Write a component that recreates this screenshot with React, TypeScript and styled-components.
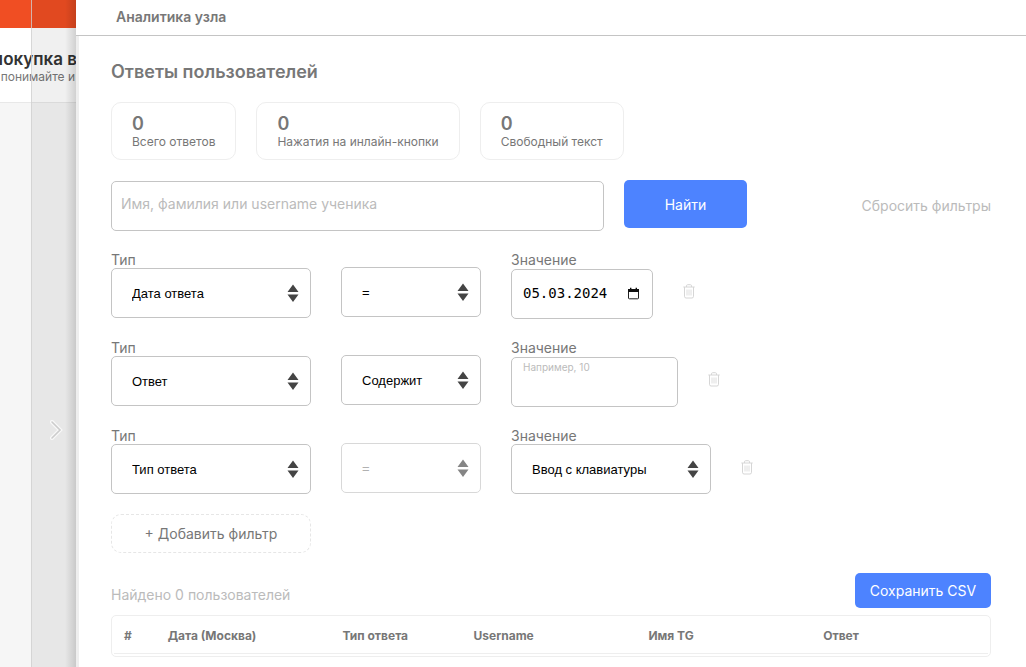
import React from "react";
import styled, { createGlobalStyle } from "styled-components";

const GlobalStyle = createGlobalStyle`
  *, *::before, *::after { box-sizing: border-box; }
  body {
    margin: 0;
    background: #f6f6f6;
    color: #777;
    font-family: Inter, Roboto, sans-serif;
    font-size: 14px;
    overflow: hidden;
  }
  button, input, select { font-family: inherit; margin: 0; }
`;

const Shell = styled.div`
  position: relative;
  min-height: 100vh;
  display: flex;
  overflow: hidden;
`;

const Underlay = styled.div`
  position: absolute;
  inset: 0;
`;

const BrandBar = styled.div`
  height: 28px;
  background: #f04e23;
`;

const CourseHeader = styled.header`
  height: 75px;
  padding-top: 20px;
  background: #fff;
  border-bottom: 1px solid #e8e8e8;
  display: flex;
  flex-direction: column;
`;

const CourseTitle = styled.strong`
  width: 77px;
  display: flex;
  justify-content: flex-end;
  white-space: nowrap;
  font-size: 17px;
  line-height: 22px;
  font-weight: 600;
  color: #333;
`;

const CourseNote = styled.span`
  width: 75px;
  display: flex;
  justify-content: flex-end;
  white-space: nowrap;
  font-size: 12px;
  line-height: 14px;
`;

const CloseStrip = styled.button`
  position: relative;
  flex: 0 0 45px;
  margin-left: 31px;
  padding: 192px 0 0 4px;
  border: 0;
  border-left: 1px solid rgba(205, 205, 205, 0.8);
  background:
    linear-gradient(to right, rgba(0, 0, 0, 0) 75%, rgba(0, 0, 0, 0.13)) padding-box,
    rgba(0, 0, 0, 0.06) padding-box;
  display: flex;
  justify-content: center;
`;

const CloseIcon = styled.svg`
  width: 14px;
  height: 20px;
  margin-top: 228px;
`;

const Drawer = styled.section`
  position: relative;
  flex: 1;
  min-width: 0;
  background: #fff;
`;

const DrawerHeader = styled.header`
  height: 36px;
  padding: 8px 40px;
  border-bottom: 1px solid #c4c4c4;
  font-size: 14px;
  line-height: 18px;
  font-weight: 600;
`;

const DrawerBody = styled.div`
  min-height: calc(100vh - 36px);
  padding: 25px 35px 10px 32px;
  border-left: 3px solid #eee;
`;

const Title = styled.h1`
  margin: 0 0 19px;
  font-size: 18px;
  line-height: 22px;
  font-weight: 600;
`;

const Stats = styled.div`
  display: flex;
  gap: 20px;
  margin-bottom: 20px;
`;

const Stat = styled.div`
  height: 58px;
  padding: 10px 20px;
  border: 1px solid #eee;
  border-radius: 10px;
  display: flex;
  flex-direction: column;
  font-size: 12px;
  line-height: 14px;
  white-space: nowrap;
`;

const StatValue = styled.strong`
  font-size: 18px;
  line-height: 22px;
  font-weight: 600;
`;

const SearchRow = styled.form`
  display: flex;
  align-items: flex-start;
  gap: 20px;
  margin-bottom: 21px;
`;

const SearchInput = styled.input`
  flex: 1;
  min-width: 0;
  height: 50px;
  margin-top: 1px;
  padding: 0 9px 5px;
  border: 1px solid #c4c4c4;
  border-radius: 5px;
  font-size: 14px;
  color: #333;
  outline: none;
  &::placeholder { color: #bbb; }
`;

const PrimaryButton = styled.button<{ $compact?: boolean }>`
  width: ${(p) => (p.$compact ? "136px" : "123px")};
  height: ${(p) => (p.$compact ? "35px" : "48px")};
  padding: 0;
  border: 0;
  border-radius: 5px;
  background: #4d83ff;
  color: #fff;
  font-size: 14px;
  white-space: nowrap;
`;

const ResetButton = styled.button`
  flex: 0 0 224px;
  height: 51px;
  padding: 0;
  border: 0;
  background: none;
  color: #bbb;
  font-size: 14px;
  text-align: right;
`;

const Filters = styled.div`
  display: flex;
  flex-direction: column;
  gap: 20px;
  margin-bottom: 18px;
`;

const FilterRow = styled.div`
  min-height: 68px;
  display: flex;
  align-items: flex-start;
  gap: 30px;
`;

const Field = styled.div<{ $gap?: number }>`
  display: flex;
  flex-direction: column;
  gap: ${(p) => p.$gap ?? 0}px;
`;

const FieldLabel = styled.label`
  height: 16px;
  font-size: 14px;
  line-height: 16px;
`;

const SelectBox = styled.div<{ $width: number; $unlabelled?: boolean; $disabled?: boolean }>`
  position: relative;
  width: ${(p) => p.$width}px;
  margin-top: ${(p) => (p.$unlabelled ? "15px" : "0")};
  opacity: ${(p) => (p.$disabled ? 0.65 : 1)};
`;

const NativeSelect = styled.select`
  appearance: none;
  width: 100%;
  height: 50px;
  padding: 0 30px 0 20px;
  border: 1px solid #c4c4c4;
  border-radius: 5px;
  background: #fff;
  color: #000;
  && { font-family: "Liberation Sans", Arial, sans-serif; }
  font-size: 13px;
  opacity: 1;
  &:disabled { color: #888; }
`;

const SelectArrows = styled.svg`
  position: absolute;
  right: 12px;
  top: 16px;
  width: 12px;
  height: 18px;
  pointer-events: none;
`;

const DateBox = styled.div`
  width: 142px;
  height: 50px;
  padding: 0 12px 2px 11px;
  border: 1px solid #c4c4c4;
  border-radius: 5px;
  display: flex;
  align-items: center;
`;

const DateInput = styled.input`
  flex: 1;
  min-width: 0;
  padding: 0;
  border: 0;
  outline: none;
  color: #000;
  && { font-family: "DejaVu Sans Mono", monospace; }
  font-size: 14px;
`;

const IconButton = styled.button`
  padding: 0;
  border: 0;
  background: none;
  display: flex;
`;

const TrashButton = styled(IconButton)`
  margin-top: 32px;
`;

const TextInput = styled.input`
  width: 167px;
  height: 50px;
  padding: 0 11px 30px;
  border: 1px solid #c4c4c4;
  border-radius: 5px;
  font-size: 10px;
  color: #333;
  outline: none;
  &::placeholder { color: #bbb; }
`;

const AddButton = styled.button`
  width: 200px;
  height: 39px;
  border: 1px dashed #e6e6e6;
  border-radius: 10px;
  background: none;
  color: #777;
  font-size: 14px;
`;

const ResultsBar = styled.div`
  display: flex;
  align-items: flex-start;
  justify-content: space-between;
  margin: 20px 0 7px;
`;

const Found = styled.span`
  padding-top: 13px;
  line-height: 18px;
  color: #bbb;
`;

const TableFrame = styled.div`
  padding: 2px;
  border: 1px solid #eee;
  border-radius: 5px;
`;

const Table = styled.table`
  width: 100%;
  table-layout: fixed;
  border-spacing: 0;
`;

const Th = styled.th<{ $share: number }>`
  width: ${(p) => p.$share}%;
  height: 36px;
  padding: 0 10px;
  border-bottom: 1px solid #eee;
  text-align: left;
  font-size: 12px;
  font-weight: 700;
  white-space: nowrap;
`;

const columns: [string, number][] = [
  ["#", 5],
  ["Дата (Москва)", 20],
  ["Тип ответа", 15],
  ["Username", 20],
  ["Имя TG", 20],
  ["Ответ", 20],
];

const stats = ["Всего ответов", "Нажатия на инлайн-кнопки", "Свободный текст"];

interface SelectProps {
  id?: string;
  label?: string;
  value: string;
  width: number;
  disabled?: boolean;
}

function Select({ id, label, value, width, disabled }: SelectProps) {
  return (
    <SelectBox $width={width} $unlabelled={!!label} $disabled={disabled}>
      <NativeSelect id={id} aria-label={label} disabled={disabled} defaultValue={value}>
        <option>{value}</option>
      </NativeSelect>
      <SelectArrows viewBox="0 0 12 18" fill="#444" aria-hidden="true">
        <path d="M6 0.5 11.5 8H0.5z M0.5 10.5h11L6 18z" />
      </SelectArrows>
    </SelectBox>
  );
}

function Trash() {
  return (
    <TrashButton type="button" aria-label="Удалить фильтр">
      <svg width="12" height="15" viewBox="0 0 12 15" fill="none" stroke="#d6d6d6" aria-hidden="true">
        <path d="M0.3 3h11.4M3.5 3V1.8Q3.5 0.7 4.6 0.7h2.8Q8.5 0.7 8.5 1.8V3M1.5 3v9.3Q1.5 14 3 14h6q1.5 0 1.5-1.7V3" />
        <path d="M4 5.5v6M6 5.5v6M8 5.5v6" strokeWidth="0.8" />
      </svg>
    </TrashButton>
  );
}

export default function App() {
  return (
    <>
      <GlobalStyle />
      <Shell>
        <Underlay>
          <BrandBar />
          <CourseHeader>
            <CourseTitle>покупка в</CourseTitle>
            <CourseNote>понимайте и</CourseNote>
          </CourseHeader>
        </Underlay>
        <CloseStrip type="button" aria-label="Закрыть панель">
          <CloseIcon viewBox="0 0 14 20" fill="none" strokeLinecap="round" aria-hidden="true">
            <path d="M3 2l8 8-8 8" stroke="#f8f8f8" strokeWidth="4" />
            <path d="M3 2l8 8-8 8" stroke="#ccc" strokeWidth="1.6" />
          </CloseIcon>
        </CloseStrip>
        <Drawer>
          <DrawerHeader>Аналитика узла</DrawerHeader>
          <DrawerBody>
            <Title>Ответы пользователей</Title>
            <Stats>
              {stats.map((name) => (
                <Stat key={name}>
                  <StatValue>0</StatValue>
                  {name}
                </Stat>
              ))}
            </Stats>
            <SearchRow onSubmit={(e) => e.preventDefault()}>
              <SearchInput aria-label="Поиск ученика" placeholder="Имя, фамилия или username ученика" />
              <PrimaryButton type="submit">Найти</PrimaryButton>
              <ResetButton type="button">Сбросить фильтры</ResetButton>
            </SearchRow>
            <Filters>
              <FilterRow>
                <Field>
                  <FieldLabel htmlFor="type-1">Тип</FieldLabel>
                  <Select id="type-1" value="Дата ответа" width={200} />
                </Field>
                <Select label="Условие" value="=" width={140} />
                <Field $gap={1}>
                  <FieldLabel htmlFor="value-1">Значение</FieldLabel>
                  <DateBox>
                    <DateInput id="value-1" defaultValue="05.03.2024" />
                    <IconButton type="button" aria-label="Открыть календарь">
                      <svg width="13" height="13" viewBox="0 0 13 13" aria-hidden="true">
                        <path d="M1.5 2.5h10v8.5q0 .8-.8.8H2.3q-.8 0-.8-.8z" fill="none" stroke="#222" />
                        <path d="M1 2h11v3H1zM3 .8h1.4V2H3zM8.6.8H10V2H8.6z" fill="#111" />
                      </svg>
                    </IconButton>
                  </DateBox>
                </Field>
                <Trash />
              </FilterRow>
              <FilterRow>
                <Field>
                  <FieldLabel htmlFor="type-2">Тип</FieldLabel>
                  <Select id="type-2" value="Ответ" width={200} />
                </Field>
                <Select label="Условие" value="Содержит" width={140} />
                <Field $gap={1}>
                  <FieldLabel htmlFor="value-2">Значение</FieldLabel>
                  <TextInput id="value-2" placeholder="Например, 10" />
                </Field>
                <Trash />
              </FilterRow>
              <FilterRow>
                <Field>
                  <FieldLabel htmlFor="type-3">Тип</FieldLabel>
                  <Select id="type-3" value="Тип ответа" width={200} />
                </Field>
                <Select label="Условие" value="=" width={140} disabled />
                <Field>
                  <FieldLabel htmlFor="value-3">Значение</FieldLabel>
                  <Select id="value-3" value="Ввод с клавиатуры" width={200} />
                </Field>
                <Trash />
              </FilterRow>
            </Filters>
            <AddButton type="button">+ Добавить фильтр</AddButton>
            <ResultsBar>
              <Found>Найдено 0 пользователей</Found>
              <PrimaryButton type="button" $compact>Сохранить CSV</PrimaryButton>
            </ResultsBar>
            <TableFrame>
              <Table>
                <thead>
                  <tr>
                    {columns.map(([name, share]) => (
                      <Th key={name} scope="col" $share={share}>{name}</Th>
                    ))}
                  </tr>
                </thead>
              </Table>
            </TableFrame>
          </DrawerBody>
        </Drawer>
      </Shell>
    </>
  );
}
